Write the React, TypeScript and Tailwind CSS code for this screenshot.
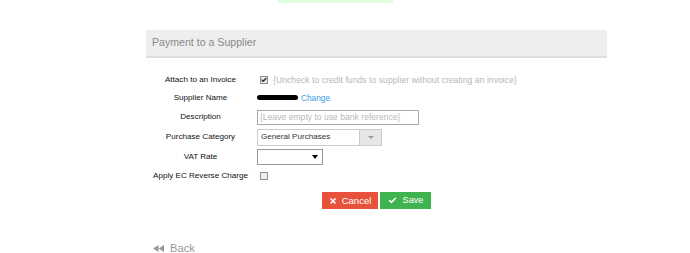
import { Check, X } from "lucide-react";

function Row({ label, h, children }: { label: string; h: string; children?: React.ReactNode }) {
  return (
    <div className={`flex items-center ${h}`}>
      <div className="w-[109px] shrink-0 text-center text-[8.1px] leading-none text-[#111] whitespace-nowrap">{label}</div>
      <div className="ml-[2px] flex items-center">{children}</div>
    </div>
  );
}

export default function App() {
  return (
    <div className="w-[690px] h-[253px] bg-white font-['Liberation_Sans',Arial,sans-serif] overflow-hidden">
      {/* flash message remnant */}
      <div className="ml-[277px] w-[116px] h-[3px] bg-[#dfffdf]" />

      <div className="ml-[146px] w-[461px] mt-[27px]">
        {/* Panel header */}
        <div className="h-[28px] bg-[#eeeeee] border-b-2 border-[#dddddd] flex items-center pl-[6px]">
          <span className="text-[10.6px] text-[#8a8a8a]">Payment to a Supplier</span>
        </div>

        {/* Form */}
        <div className="mt-[13px]">
          <Row label="Attach to an Invoice" h="h-[18px]">
            <span className="w-[8px] h-[8px] border border-[#8f8f8f] bg-[#e8e8e8] flex items-center justify-center ml-[3px]">
              <Check size={6} strokeWidth={5} className="text-[#222]" />
            </span>
            <span className="ml-[5px] text-[8.7px] leading-none text-[#b8b8b8] whitespace-nowrap">
              {"{Uncheck to credit funds to supplier without creating an invoice}"}
            </span>
          </Row>
          <Row label="Supplier Name" h="h-[18px]">
            <span className="w-[41px] h-[5px] rounded-full bg-black" />
            <span className="ml-[3px] text-[8.3px] leading-none text-[#3d9be0]">Change</span>
          </Row>
          <Row label="Description" h="h-[20px]">
            <div className="w-[162px] h-[15px] border border-[#aaa] flex items-center px-[2px] text-[8.6px] leading-none text-[#b8b8b8] whitespace-nowrap overflow-hidden">
              {"{Leave empty to use bank reference}"}
            </div>
          </Row>
          <Row label="Purchase Category" h="h-[20px]">
            <div className="w-[125px] h-[17px] border border-[#ccc] flex">
              <div className="flex-1 flex items-center pl-[3px] text-[8.1px] leading-none text-[#333]">General Purchases</div>
              <div className="w-[22px] bg-[#e6e6e6] border-l border-[#ccc] flex items-center justify-center">
                <span className="w-0 h-0 border-l-[3px] border-r-[3px] border-t-[3px] border-l-transparent border-r-transparent border-t-[#999]" />
              </div>
            </div>
          </Row>
          <Row label="VAT Rate" h="h-[20px]">
            <div className="w-[66px] h-[16px] border border-[#999] flex items-center justify-end pr-[4px]">
              <span className="w-0 h-0 border-l-[3px] border-r-[3px] border-t-[4px] border-l-transparent border-r-transparent border-t-black" />
            </div>
          </Row>
          <Row label="Apply EC Reverse Charge" h="h-[18px]">
            <span className="w-[8px] h-[8px] border border-[#8f8f8f] bg-[#ececec] ml-[3px]" />
          </Row>
        </div>

        {/* Buttons */}
        <div className="flex gap-[2px] ml-[176px] mt-[7px]">
          <button className="w-[56px] h-[17px] bg-[#e6533a] flex items-center justify-center gap-[5px] text-white text-[9.5px] leading-none">
            <X size={8} strokeWidth={5} />
            Cancel
          </button>
          <button className="w-[51px] h-[17px] bg-[#3fb34f] flex items-center justify-center gap-[6px] text-white text-[9.2px] leading-none">
            <Check size={9} strokeWidth={4} />
            Save
          </button>
        </div>

        {/* Back */}
        <div className="mt-[33px] ml-[7px] h-[13px] flex items-center gap-[6px] text-[11.2px] leading-none text-[#999]">
          <svg width="11" height="7" viewBox="0 0 11 7" fill="#999">
            <path d="M5.5 0 L0 3.5 L5.5 7 Z" />
            <path d="M11 0 L5.5 3.5 L11 7 Z" />
          </svg>
          Back
        </div>
      </div>
    </div>
  );
}
